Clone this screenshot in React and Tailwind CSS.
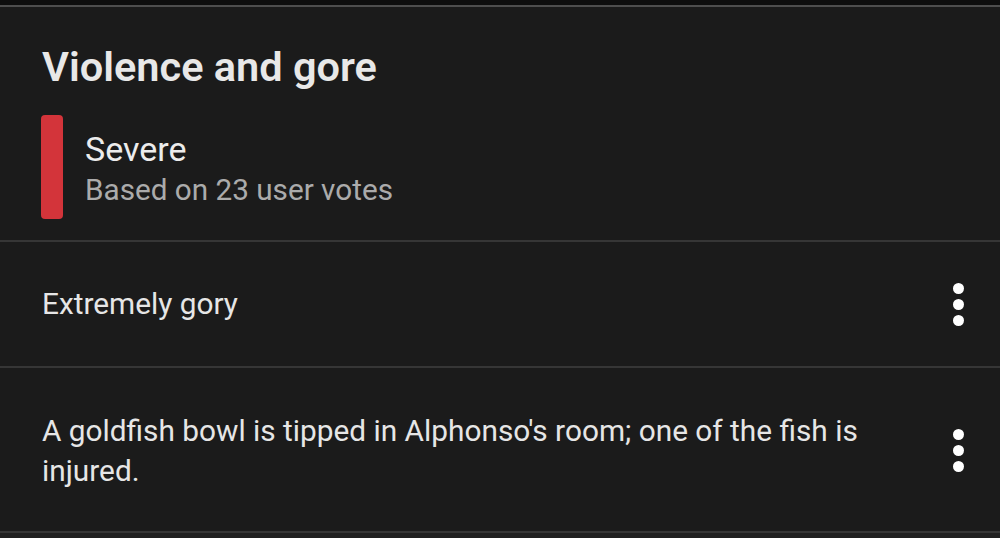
import React from 'react';

const rows = [
  { id: 1, text: 'Extremely gory', cls: 'h-[124px]' },
  { id: 2, text: "A goldfish bowl is tipped in Alphonso's room; one of the fish is injured.", cls: 'h-[163px] pt-[2px]' },
];

function Dots() {
  return (
    <div className="w-[40px] flex flex-col items-center gap-[5px] shrink-0">
      <span className="w-[11px] h-[11px] rounded-full bg-white"></span>
      <span className="w-[11px] h-[11px] rounded-full bg-white"></span>
      <span className="w-[11px] h-[11px] rounded-full bg-white"></span>
    </div>
  );
}

export default function App() {
  return (
    <div className="w-[1000px] h-[538px] overflow-hidden bg-[#1b1b1b] text-[#e6e6e6]" style={{ fontFamily: 'Roboto, "Liberation Sans", sans-serif' }}>
      <div className="h-[5px] bg-[#0e0e0e]"></div>
      <div className="h-[2px] bg-[#4e4e4e]"></div>

      {/* Header */}
      <div className="pl-[41px] pt-[36px] pb-[21px]">
        <h1 className="pl-[1px] text-[41.5px] leading-[48px] font-semibold text-[#e8e8e8]">Violence and gore</h1>
        <div className="mt-[24px] flex items-center gap-[22px]">
          <div className="w-[22px] h-[104px] rounded-[4px] bg-[#d3343a] shrink-0"></div>
          <div className="pt-[3px]">
            <p className="text-[34px] leading-[42px] text-[#ececec]">Severe</p>
            <p className="text-[29.7px] leading-[40px] text-[#ababab]">Based on 23 user votes</p>
          </div>
        </div>
      </div>

      {rows.map(r => (
        <div key={r.id}>
          <div className="h-[2px] bg-[#363636]"></div>
          <div className={`${r.cls} flex items-center pl-[42px] pr-[22px]`}>
            <p className="flex-1 text-[29.8px] leading-[40px] pr-[40px]">{r.text}</p>
            <Dots />
          </div>
        </div>
      ))}
      <div className="h-[2px] bg-[#363636]"></div>
      <div className="h-[5px] bg-[#202020]"></div>
    </div>
  );
}
